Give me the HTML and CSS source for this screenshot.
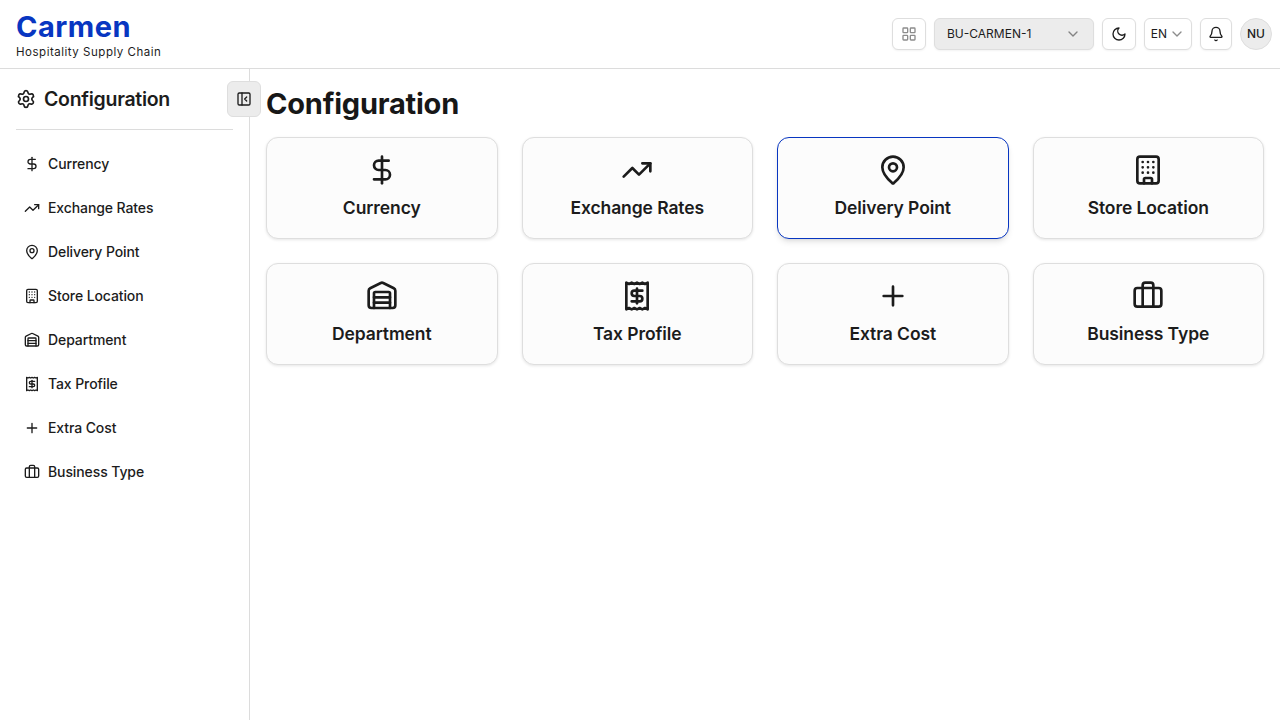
FILE: index.html
```html
<!DOCTYPE html>
<html lang="en">
<head>
<meta charset="utf-8">
<title>Carmen - Configuration</title>
<link rel="stylesheet" href="styles.css">
</head>
<body>
<svg class="sprite" aria-hidden="true">
  <symbol id="dollar" viewBox="0 0 24 24"><path d="M12 2v20"/><path d="M17 5H9.5a3.5 3.5 0 0 0 0 7h5a3.5 3.5 0 0 1 0 7H6"/></symbol>
  <symbol id="trend" viewBox="0 0 24 24"><path d="M16 7h6v6"/><path d="m22 7-8.5 8.5-5-5L2 17"/></symbol>
  <symbol id="pin" viewBox="0 0 24 24"><path d="M20 10c0 4.993-5.539 10.193-7.399 11.799a1 1 0 0 1-1.202 0C9.539 20.193 4 14.993 4 10a8 8 0 0 1 16 0"/><circle cx="12" cy="10" r="3"/></symbol>
  <symbol id="building" viewBox="0 0 24 24"><rect x="4" y="2" width="16" height="20" rx="2"/><path d="M9 22v-3a1 1 0 0 1 1-1h4a1 1 0 0 1 1 1v3M8 6h.01M12 6h.01M16 6h.01M8 10h.01M12 10h.01M16 10h.01M8 14h.01M12 14h.01M16 14h.01"/></symbol>
  <symbol id="warehouse" viewBox="0 0 24 24"><path d="M18 21V10a1 1 0 0 0-1-1H7a1 1 0 0 0-1 1v11"/><path d="M22 19a2 2 0 0 1-2 2H4a2 2 0 0 1-2-2V8a2 2 0 0 1 1.132-1.803l7.95-3.974a2 2 0 0 1 1.837 0l7.948 3.974A2 2 0 0 1 22 8z"/><path d="M6 13h12M6 17h12"/></symbol>
  <symbol id="receipt" viewBox="0 0 24 24"><path d="M4 2v20l2-1 2 1 2-1 2 1 2-1 2 1 2-1 2 1V2l-2 1-2-1-2 1-2-1-2 1-2-1-2 1Z"/><path d="M16 8h-6a2 2 0 1 0 0 4h4a2 2 0 1 1 0 4H8"/><path d="M12 17.5v-11"/></symbol>
  <symbol id="plus" viewBox="0 0 24 24"><path d="M5 12h14M12 5v14"/></symbol>
  <symbol id="briefcase" viewBox="0 0 24 24"><path d="M16 20V4a2 2 0 0 0-2-2h-4a2 2 0 0 0-2 2v16"/><rect x="2" y="6" width="20" height="14" rx="2"/></symbol>
  <symbol id="grid" viewBox="0 0 24 24"><rect x="3" y="3" width="7" height="7" rx="1"/><rect x="14" y="3" width="7" height="7" rx="1"/><rect x="14" y="14" width="7" height="7" rx="1"/><rect x="3" y="14" width="7" height="7" rx="1"/></symbol>
  <symbol id="chevron" viewBox="0 0 24 24"><path d="m6 9 6 6 6-6"/></symbol>
  <symbol id="moon" viewBox="0 0 24 24"><path d="M12 3a6 6 0 0 0 9 9 9 9 0 1 1-9-9Z"/></symbol>
  <symbol id="bell" viewBox="0 0 24 24"><path d="M10.268 21a2 2 0 0 0 3.464 0"/><path d="M3.262 15.326A1 1 0 0 0 4 17h16a1 1 0 0 0 .74-1.673C19.41 13.956 18 12.499 18 8A6 6 0 0 0 6 8c0 4.499-1.411 5.956-2.738 7.326"/></symbol>
  <symbol id="settings" viewBox="0 0 24 24"><path d="M9.671 4.136a2.34 2.34 0 0 1 4.659 0 2.34 2.34 0 0 0 3.319 1.915 2.34 2.34 0 0 1 2.33 4.033 2.34 2.34 0 0 0 0 3.831 2.34 2.34 0 0 1-2.33 4.033 2.34 2.34 0 0 0-3.319 1.915 2.34 2.34 0 0 1-4.659 0 2.34 2.34 0 0 0-3.32-1.915 2.34 2.34 0 0 1-2.33-4.033 2.34 2.34 0 0 0 0-3.831A2.34 2.34 0 0 1 6.35 6.051a2.34 2.34 0 0 0 3.319-1.915"/><circle cx="12" cy="12" r="3"/></symbol>
  <symbol id="panel" viewBox="0 0 24 24"><rect x="3" y="3" width="18" height="18" rx="2"/><path d="M9 3v18"/><path d="m16 15-3-3 3-3"/></symbol>
</svg>

<header class="topbar">
  <div class="brand">
    <div class="brand-name">Carmen</div>
    <div class="brand-tagline">Hospitality Supply Chain</div>
  </div>
  <div class="actions">
    <button class="control modules"><svg class="icon muted"><use href="#grid"/></svg></button>
    <button class="control unit"><span>BU-CARMEN-1</span><svg class="icon muted"><use href="#chevron"/></svg></button>
    <button class="control theme"><svg class="icon"><use href="#moon"/></svg></button>
    <button class="control lang"><span>EN</span><svg class="icon muted"><use href="#chevron"/></svg></button>
    <button class="control bell"><svg class="icon"><use href="#bell"/></svg></button>
    <div class="avatar">NU</div>
  </div>
</header>

<div class="layout">
  <aside class="sidebar">
    <div class="side-title"><svg class="icon icon-md"><use href="#settings"/></svg><span>Configuration</span></div>
    <button class="collapse"><svg class="icon"><use href="#panel"/></svg></button>
    <nav class="side-nav">
      <a class="side-link"><svg class="icon"><use href="#dollar"/></svg><span>Currency</span></a>
      <a class="side-link"><svg class="icon"><use href="#trend"/></svg><span>Exchange Rates</span></a>
      <a class="side-link"><svg class="icon"><use href="#pin"/></svg><span>Delivery Point</span></a>
      <a class="side-link"><svg class="icon"><use href="#building"/></svg><span>Store Location</span></a>
      <a class="side-link"><svg class="icon"><use href="#warehouse"/></svg><span>Department</span></a>
      <a class="side-link"><svg class="icon"><use href="#receipt"/></svg><span>Tax Profile</span></a>
      <a class="side-link"><svg class="icon"><use href="#plus"/></svg><span>Extra Cost</span></a>
      <a class="side-link"><svg class="icon"><use href="#briefcase"/></svg><span>Business Type</span></a>
    </nav>
  </aside>
  <main class="content">
    <h1 class="page-title">Configuration</h1>
    <div class="cards">
      <a class="card"><svg class="icon icon-lg"><use href="#dollar"/></svg><span>Currency</span></a>
      <a class="card"><svg class="icon icon-lg"><use href="#trend"/></svg><span>Exchange Rates</span></a>
      <a class="card card-active"><svg class="icon icon-lg"><use href="#pin"/></svg><span>Delivery Point</span></a>
      <a class="card"><svg class="icon icon-lg"><use href="#building"/></svg><span>Store Location</span></a>
      <a class="card"><svg class="icon icon-lg"><use href="#warehouse"/></svg><span>Department</span></a>
      <a class="card"><svg class="icon icon-lg"><use href="#receipt"/></svg><span>Tax Profile</span></a>
      <a class="card"><svg class="icon icon-lg"><use href="#plus"/></svg><span>Extra Cost</span></a>
      <a class="card"><svg class="icon icon-lg"><use href="#briefcase"/></svg><span>Business Type</span></a>
    </div>
  </main>
</div>
</body>
</html>
```
FILE: styles.css
```css
* { box-sizing: border-box; }
body {
  margin: 0;
  height: 100vh;
  display: flex;
  flex-direction: column;
  overflow: hidden;
  background: #fff;
  color: #1c1c1c;
  font-family: Inter, "Liberation Sans", sans-serif;
  -webkit-font-smoothing: antialiased;
}
button { font: inherit; color: inherit; padding: 0; margin: 0; }
.sprite { display: none; }
.icon {
  width: 16px;
  height: 16px;
  flex: none;
  display: block;
  fill: none;
  stroke: currentColor;
  stroke-width: 2;
  stroke-linecap: round;
  stroke-linejoin: round;
}
.icon-md { width: 20px; height: 20px; }
.icon-lg { width: 32px; height: 32px; }
.muted { opacity: 0.5; }

.topbar {
  height: 69px;
  flex: none;
  display: flex;
  align-items: center;
  justify-content: space-between;
  padding: 0 8px 0 16px;
  border-bottom: 1px solid #dcdcdc;
}
.brand-name {
  padding-top: 1px;
  font-size: 29px;
  line-height: 35px;
  font-weight: 700;
  letter-spacing: 0.5px;
  color: #0836c1;
}
.brand-tagline {
  font-size: 11.5px;
  line-height: 16px;
  letter-spacing: 0.52px;
}
.actions { display: flex; align-items: center; gap: 8px; }
.control {
  height: 32px;
  display: flex;
  align-items: center;
  justify-content: center;
  border: 1px solid #dedede;
  border-radius: 6px;
  background: #fff;
  box-shadow: 0 1px 2px rgba(0, 0, 0, 0.05);
  font-size: 12px;
  line-height: 16px;
}
.modules, .theme { width: 34px; }
.bell { width: 32px; }
.unit {
  width: 160px;
  justify-content: space-between;
  padding: 0 12px;
  background: #ececec;
}
.lang { width: 48px; gap: 2px; }
.avatar {
  width: 32px;
  height: 32px;
  display: flex;
  align-items: center;
  justify-content: center;
  border: 1px solid #dedede;
  border-radius: 50%;
  background: #ececec;
  font-size: 12px;
  line-height: 16px;
  font-weight: 500;
}

.layout { flex: 1; display: flex; min-height: 0; }
.sidebar {
  position: relative;
  width: 250px;
  flex: none;
  padding: 0 16px;
  border-right: 1px solid #dcdcdc;
}
.side-title {
  height: 61px;
  display: flex;
  align-items: center;
  gap: 8px;
  border-bottom: 1px solid #dcdcdc;
  font-size: 19.5px;
  line-height: 28px;
  font-weight: 600;
  letter-spacing: -0.28px;
}
.collapse {
  position: absolute;
  top: 12px;
  right: -12px;
  width: 34px;
  height: 36px;
  display: flex;
  align-items: center;
  justify-content: center;
  border: 1px solid #dedede;
  border-radius: 6px;
  background: #ececec;
}
.side-nav {
  display: flex;
  flex-direction: column;
  gap: 8px;
  padding-top: 16px;
}
.side-link {
  height: 36px;
  display: flex;
  align-items: center;
  gap: 8px;
  padding: 0 8px;
  font-size: 14px;
  line-height: 20px;
  font-weight: 500;
  letter-spacing: -0.1px;
}

.content { flex: 1; min-width: 0; padding: 16px; }
.page-title {
  margin: 0 0 15px;
  padding-top: 1px;
  font-size: 29px;
  line-height: 36px;
  font-weight: 700;
  letter-spacing: -0.22px;
  color: #171717;
}
.cards {
  display: grid;
  grid-template-columns: repeat(4, 1fr);
  gap: 24px;
}
.card {
  display: flex;
  flex-direction: column;
  align-items: center;
  gap: 8px;
  padding: 16px;
  border: 1px solid #dedede;
  border-radius: 12px;
  background: #fcfcfc;
  box-shadow: 0 1px 3px rgba(0, 0, 0, 0.1);
  font-size: 17.5px;
  line-height: 28px;
  font-weight: 600;
  letter-spacing: -0.09px;
}
.card-active {
  border-color: #0836c1;
  box-shadow: 0 4px 6px -1px rgba(0, 0, 0, 0.1), 0 2px 4px -2px rgba(0, 0, 0, 0.1);
}
```
